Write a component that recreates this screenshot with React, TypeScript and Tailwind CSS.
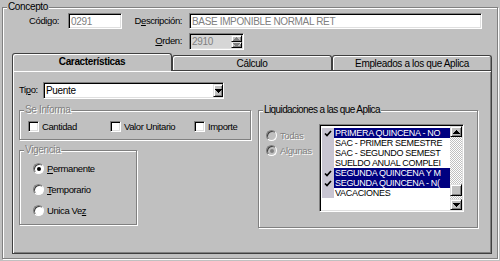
import type { ReactNode } from "react";

const sunken =
  "border border-t-[#808080] border-l-[#808080] border-r-white border-b-white shadow-[inset_1px_1px_0_#000,inset_-1px_-1px_0_#dfdfdf]";
const raised =
  "border border-t-[#dfdfdf] border-l-[#dfdfdf] border-r-black border-b-black shadow-[inset_1px_1px_0_#fff,inset_-1px_-1px_0_#808080]";
const etched = "border border-[#808080] shadow-[1px_1px_0_#fff,inset_1px_1px_0_#fff]";
const grayText = "text-[#808080] [text-shadow:1px_1px_0_#fff]";
// narrower label text, as in the old dialog font
const lbl = "text-[9.5px] tracking-[-0.4px]";

const items = [
  { t: "PRIMERA QUINCENA - NO", on: true },
  { t: "SAC - PRIMER SEMESTRE", on: false },
  { t: "SAC - SEGUNDO SEMEST", on: false },
  { t: "SUELDO ANUAL COMPLEI", on: false },
  { t: "SEGUNDA QUINCENA Y M", on: true },
  { t: "SEGUNDA QUINCENA - N(", on: true },
  { t: "VACACIONES", on: false },
];

function Tri({ up, color = "#000" }: { up?: boolean; color?: string }) {
  return (
    <svg width="7" height="4" viewBox="0 0 7 4" shapeRendering="crispEdges">
      <path d={up ? "M3.5 0L7 4L0 4Z" : "M0 0L7 0L3.5 4Z"} fill={color} />
    </svg>
  );
}

function GroupBox({ label, disabled, className, labelClass, children }: { label: string; disabled?: boolean; className: string; labelClass?: string; children?: ReactNode }) {
  return (
    <div className={`relative ${etched} ${className}`}>
      <span className={`absolute -top-[7px] left-[4px] px-[1px] bg-[#c0c0c0] leading-[12px] ${labelClass ?? ""} ${disabled ? grayText : "text-black"}`}>
        {label}
      </span>
      {children}
    </div>
  );
}

function CheckBox({ label, className }: { label: string; className?: string }) {
  return (
    <div className={`flex items-center gap-[3px] ${className ?? ""}`}>
      <span className={`w-[11px] h-[11px] bg-white ${sunken}`} />
      <span className={`leading-[11px] ${lbl}`}>{label}</span>
    </div>
  );
}

function Radio({ children, checked, disabled }: { children: ReactNode; checked?: boolean; disabled?: boolean }) {
  return (
    <div className="flex items-center gap-[3px] h-[11px]">
      <span
        className={`shrink-0 w-[11px] h-[11px] rounded-full flex items-center justify-center border border-t-[#808080] border-l-[#808080] border-r-white border-b-white shadow-[inset_1px_1px_0_#404040] ${disabled ? "bg-[#c0c0c0]" : "bg-white"}`}
      >
        {checked && <span className={`w-[4px] h-[4px] rounded-full ${disabled ? "bg-[#808080]" : "bg-black"}`} />}
      </span>
      <span className={`leading-[11px] ${lbl} ${disabled ? grayText : ""}`}>{children}</span>
    </div>
  );
}

function Check() {
  return (
    <svg width="8" height="7" viewBox="0 0 8 7">
      <path d="M1 3.5L3 5.5L7 1" fill="none" stroke="#000" strokeWidth="1.7" />
    </svg>
  );
}

export default function App() {
  return (
    <div className="w-[500px] h-[261px] bg-[#c0c0c0] text-black text-[10px] tracking-[-0.35px] font-[family-name:'Liberation_Sans',Arial,sans-serif] overflow-hidden pt-[7px] pl-[2px]">
      <GroupBox label="Concepto" className="w-[496px] h-[252px] pt-[5px] pl-[1px]">
        <div className="flex items-center h-[16px]">
          <span className={`w-[55px] text-right ${lbl}`}>
            Códi<u>g</u>o:
          </span>
          <div className={`ml-[9px] w-[54px] h-[16px] bg-white ${sunken} flex items-center pl-[2px] text-[#808080]`}>0291</div>
          <span className={`w-[60px] text-right ${lbl}`}>
            D<u>e</u>scripción:
          </span>
          <div className={`ml-[7px] w-[293px] h-[16px] bg-white ${sunken} flex items-center pl-[2px] text-[#808080]`}>
            BASE IMPONIBLE NORMAL RET
          </div>
        </div>
        <div className="flex items-center h-[17px] mt-[4px]">
          <span className={`w-[178px] text-right ${lbl}`}>
            <u>O</u>rden:
          </span>
          <div className={`ml-[7px] w-[55px] h-[17px] bg-[#d6d6d6] ${sunken} flex items-center pl-[2px] text-[#808080]`}>
            <span className="flex-1">2910</span>
            <div className="flex flex-col w-[11px] h-[13px] mr-[1px]">
              <div className={`h-[7px] bg-[#c0c0c0] ${raised} flex items-center justify-center`}>
                <Tri up color="#808080" />
              </div>
              <div className={`h-[6px] bg-[#c0c0c0] ${raised} flex items-center justify-center`}>
                <Tri color="#808080" />
              </div>
            </div>
          </div>
        </div>

        <div className="ml-[8px] mt-[3px] w-[480px]">
          <div className="flex items-end h-[17px]">
            <div className="relative z-10 -mb-px w-[160px] h-[18px] bg-[#c0c0c0] rounded-t-[3px] border border-b-0 border-[#404040] shadow-[inset_1px_1px_0_#fff] flex items-center justify-center font-bold pb-[2px]">
              Características
            </div>
            <div className="w-[160px] h-[15px] rounded-t-[3px] border border-b-0 border-[#404040] shadow-[inset_1px_1px_0_#fff] flex items-center justify-center">
              Cálculo
            </div>
            <div className="w-[160px] h-[15px] rounded-t-[3px] border border-b-0 border-[#404040] shadow-[inset_1px_1px_0_#fff,inset_-1px_0_0_#808080] flex items-center justify-center">
              Empleados a los que Aplica
            </div>
          </div>
          <div className="h-[184px] border border-[#404040] shadow-[inset_1px_1px_0_#fff,inset_-1px_-1px_0_#808080] pt-[11px] pl-[6px]">
            <div className="flex items-center h-[17px]">
              <span className={`w-[24px] ${lbl}`}>
                Ti<u>p</u>o:
              </span>
              <div className={`w-[181px] h-[17px] bg-white ${sunken} flex items-center pl-[2px]`}>
                <span className="flex-1">Puente</span>
                <div className={`w-[10px] h-[13px] bg-[#c0c0c0] ${raised} flex items-center justify-center`}>
                  <Tri />
                </div>
              </div>
            </div>

            <div className="flex items-start mt-[11px]">
              <div className="flex flex-col w-[232px]">
                <GroupBox label="Se Informa" disabled className="h-[30px] pt-[10px] pl-[8px]">
                  <div className="flex items-center">
                    <CheckBox label="Cantidad" className="w-[82px]" />
                    <CheckBox label="Valor Unitario" className="w-[84px]" />
                    <CheckBox label="Importe" />
                  </div>
                </GroupBox>
                <GroupBox label="Vigencia" disabled className="mt-[10px] w-[118px] h-[75px] pt-[12px] pl-[13px]">
                  <div className="flex flex-col gap-[10px]">
                    <Radio checked>
                      <u>P</u>ermanente
                    </Radio>
                    <Radio>
                      <u>T</u>emporario
                    </Radio>
                    <Radio>
                      Unica Ve<u>z</u>
                    </Radio>
                  </div>
                </GroupBox>
              </div>

              <GroupBox
                label="Liquidaciones a las que Aplica"
                labelClass="tracking-[-0.6px]"
                className="ml-[7px] w-[220px] h-[118px] pt-[13px] pl-[7px]"
              >
                <div className="flex items-start">
                  <div className="w-[53px] mt-[6px] flex flex-col gap-[4px]">
                    <Radio disabled>Todas</Radio>
                    <Radio disabled checked>
                      Algunas
                    </Radio>
                  </div>
                  <div className={`w-[145px] h-[88px] bg-white ${sunken} flex p-[1px]`}>
                    <div className="flex-1 pt-[2px] pl-[1px] text-[9px] tracking-[-0.3px] overflow-hidden">
                      {items.map((it) => (
                        <div key={it.t} className="flex h-[10px]">
                          <div className="shrink-0 w-[12px] bg-[#c8c5d2] flex items-center justify-center">{it.on && <Check />}</div>
                          <div
                            className={`flex-1 whitespace-nowrap overflow-hidden leading-[10px] pl-[1px] ${it.on ? "bg-[#000080] text-white" : ""}`}
                          >
                            {it.t}
                          </div>
                        </div>
                      ))}
                    </div>
                    <div className="w-[12px] flex flex-col bg-[repeating-conic-gradient(#fff_0_25%,#c0c0c0_0_50%)] bg-[length:2px_2px]">
                      <div className={`h-[11px] bg-[#c0c0c0] ${raised} flex items-center justify-center`}>
                        <Tri up />
                      </div>
                      <div className="flex-1" />
                      <div className={`h-[12px] bg-[#c0c0c0] ${raised}`} />
                      <div className="h-[3px]" />
                      <div className={`h-[11px] bg-[#c0c0c0] ${raised} flex items-center justify-center`}>
                        <Tri />
                      </div>
                    </div>
                  </div>
                </div>
              </GroupBox>
            </div>
          </div>
        </div>
      </GroupBox>
    </div>
  );
}
